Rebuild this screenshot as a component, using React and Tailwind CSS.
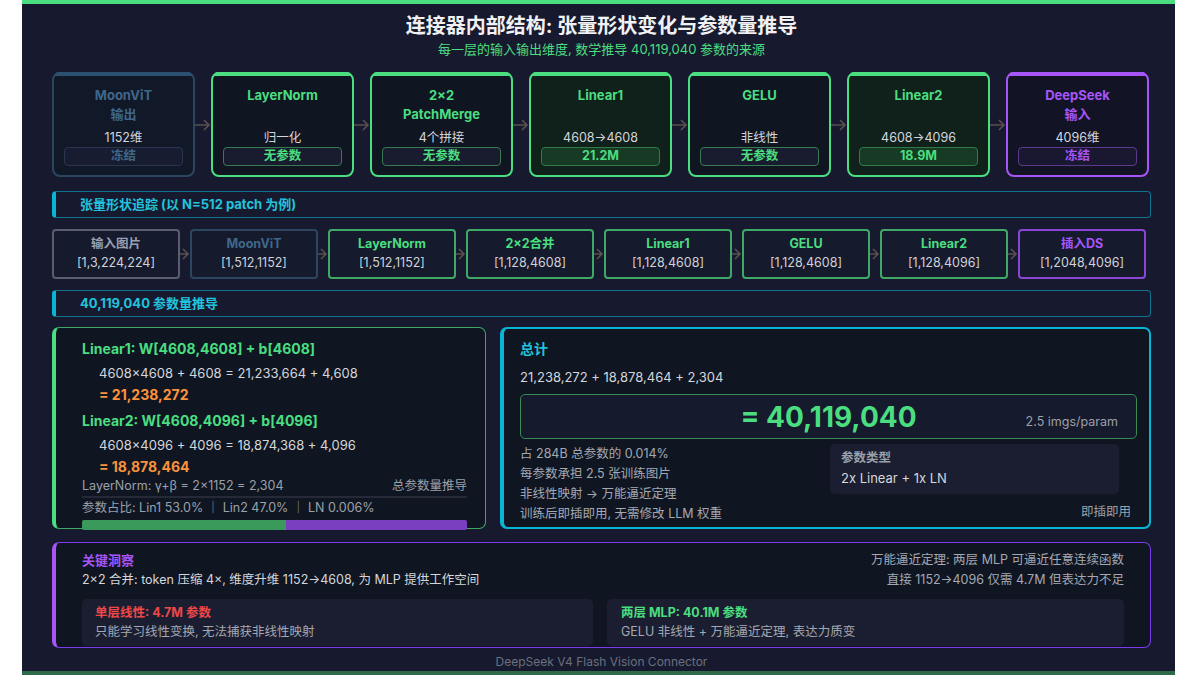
import React from "react";

const font = { fontFamily: '"Inter", "Noto Sans CJK SC", sans-serif' };

const topBoxes = [
  { t: ["MoonViT", "输出"], d: "1152维", p: "冻结", kind: "blue" },
  { t: ["LayerNorm"], d: "归一化", p: "无参数", kind: "green" },
  { t: ["2×2", "PatchMerge"], d: "4个拼接", p: "无参数", kind: "green" },
  { t: ["Linear1"], d: "4608→4608", p: "21.2M", kind: "lin" },
  { t: ["GELU"], d: "非线性", p: "无参数", kind: "green" },
  { t: ["Linear2"], d: "4608→4096", p: "18.9M", kind: "lin" },
  { t: ["DeepSeek", "输入"], d: "4096维", p: "冻结", kind: "purple" },
];

const boxStyle = {
  blue: { box: "border-[#2c4661] bg-[#111827]", top: "bg-[#2c5170]", title: "text-[#3f6789]", pill: "border-[#2a3650] bg-[#181c30] text-[#3f6789]" },
  green: { box: "border-[#4ade80] bg-[#101522]", top: "bg-[#4ade80]", title: "text-[#4ade80]", pill: "border-[#3a7a52] bg-[#181c2e] text-[#4ade80]" },
  lin: { box: "border-[#4ade80] bg-[#10201a]", top: "bg-[#4ade80]", title: "text-[#4ade80]", pill: "border-[#2f7a46] bg-[#173a24] text-[#4ade80]" },
  purple: { box: "border-[#a855f7] bg-[#121426]", top: "bg-[#a855f7]", title: "text-[#a855f7]", pill: "border-[#5b3a8c] bg-[#1a1730] text-[#a855f7]" },
};

const shapes = [
  { t: "输入图片", s: "[1,3,224,224]", b: "border-[#5a5e70]", c: "text-[#9aa0b0]" },
  { t: "MoonViT", s: "[1,512,1152]", b: "border-[#2c4661]", c: "text-[#3f6789]" },
  { t: "LayerNorm", s: "[1,512,1152]", b: "border-[#3fa866]", c: "text-[#4ade80]" },
  { t: "2×2合并", s: "[1,128,4608]", b: "border-[#3fa866]", c: "text-[#4ade80]" },
  { t: "Linear1", s: "[1,128,4608]", b: "border-[#3fa866]", c: "text-[#4ade80]" },
  { t: "GELU", s: "[1,128,4608]", b: "border-[#3fa866]", c: "text-[#4ade80]" },
  { t: "Linear2", s: "[1,128,4096]", b: "border-[#3fa866]", c: "text-[#4ade80]" },
  { t: "插入DS", s: "[1,2048,4096]", b: "border-[#8b45d6]", c: "text-[#a855f7]" },
];

const Arrow = ({ w = 16 }) => (
  <svg width={w} height="16" viewBox={`0 0 ${w} 16`} className="shrink-0">
    <path d={`M0 8h${w - 2}M${w - 7} 3l5 5-5 5`} stroke="#5a5050" strokeWidth="1.6" fill="none" />
  </svg>
);

const SectionBar = ({ children }) => (
  <div className="h-[27px] rounded-[4px] border border-[#0e7490] border-l-4 border-l-[#06b6d4] bg-[#171a2e] flex items-center pl-[24px] text-[13px] font-bold text-[#22c3dd]">
    {children}
  </div>
);

export default function App() {
  return (
    <div className="w-[1200px] h-[675px] bg-white flex" style={font}>
      <div className="ml-[22px] w-[1153px] h-[675px] bg-[#171a2e] border-t-4 border-[#4ade80] border-b-4 border-b-[#2d6a4a] flex flex-col pl-[30px] pr-[24px]">
        <div className="text-center pt-[8px]">
          <div className="text-[20px] font-bold text-[#f1f1f4] leading-[28px]">连接器内部结构: 张量形状变化与参数量推导</div>
          <div className="text-[13px] text-[#4ade80] leading-[18px]">每一层的输入输出维度, 数学推导 40,119,040 参数的来源</div>
        </div>

        <div className="flex items-center mt-[14px]">
          {topBoxes.map((b, i) => {
            const s = boxStyle[b.kind];
            return (
              <React.Fragment key={i}>
                {i > 0 && <Arrow />}
                <div className={`relative w-[143px] h-[105px] rounded-[8px] border-2 ${s.box} flex flex-col items-center pt-[12px] px-[10px]`}>
                  <div className={`absolute -top-[2px] left-[1px] right-[1px] h-[4px] rounded-t-[4px] ${s.top}`} />
                  <div className={`h-[38px] text-[13px] font-bold leading-[19px] text-center ${s.title}`}>
                    {b.t.map((l, j) => <div key={j}>{l}</div>)}
                  </div>
                  <div className="text-[12.5px] text-[#d4d6dc] mt-[5px] leading-[18px]">{b.d}</div>
                  <div className={`w-full h-[19px] rounded-[4px] border text-[12.5px] font-bold flex items-center justify-center ${s.pill}`}>{b.p}</div>
                </div>
              </React.Fragment>
            );
          })}
        </div>

        <div className="mt-[14px]"><SectionBar>张量形状追踪 (以 N=512 patch 为例)</SectionBar></div>

        <div className="flex items-center mt-[11px]">
          {shapes.map((b, i) => (
            <React.Fragment key={i}>
              {i > 0 && <Arrow w={10} />}
              <div className={`w-[128px] h-[50px] rounded-[4px] border-2 bg-[#161a2d] flex flex-col items-center justify-center ${b.b}`}>
                <div className={`text-[12.5px] font-bold leading-[18px] ${b.c}`}>{b.t}</div>
                <div className="text-[12.5px] text-[#cfd2d8] leading-[20px]">{b.s}</div>
              </div>
            </React.Fragment>
          ))}
        </div>

        <div className="mt-[11px]"><SectionBar>40,119,040 参数量推导</SectionBar></div>

        <div className="flex gap-[14px] mt-[10px]">
          <div className="w-[434px] h-[202px] rounded-[7px] border border-[#3fa866] border-l-4 border-l-[#4ade80] bg-[#0f1622] pl-[26px] pr-[18px] pt-[11px]">
            <div className="text-[14px] font-bold text-[#4ade80] leading-[20px]">Linear1: W[4608,4608] + b[4608]</div>
            <div className="pl-[17px] text-[13px] text-[#d4d6dc] leading-[24px] mt-[2px]">4608×4608 + 4608 = 21,233,664 + 4,608</div>
            <div className="pl-[17px] text-[14px] font-bold text-[#fb923c] leading-[20px]">= 21,238,272</div>
            <div className="text-[14px] font-bold text-[#4ade80] leading-[20px] mt-[6px]">Linear2: W[4608,4096] + b[4096]</div>
            <div className="pl-[17px] text-[13px] text-[#d4d6dc] leading-[24px] mt-[2px]">4608×4096 + 4096 = 18,874,368 + 4,096</div>
            <div className="pl-[17px] text-[14px] font-bold text-[#fb923c] leading-[20px]">= 18,878,464</div>
            <div className="flex justify-between text-[12.5px] text-[#9ca0aa] leading-[18px] border-b-2 border-[#262a38] pb-[1px]">
              <span>LayerNorm: γ+β = 2×1152 = 2,304</span><span>总参数量推导</span>
            </div>
            <div className="text-[12.5px] text-[#9ca0aa] leading-[20px]">参数占比: Lin1 53.0% │ Lin2 47.0% │ LN 0.006%</div>
            <div className="flex h-[10px] rounded-[2px] overflow-hidden mt-[2px]">
              <div className="w-[53%] bg-[#3a9a5c]" />
              <div className="flex-1 bg-[#7a3fc0]" />
            </div>
          </div>

          <div className="flex-1 h-[202px] rounded-[7px] border-2 border-[#06b6d4] border-l-4 bg-[#0f1622] pl-[16px] pr-[12px] pt-[10px]">
            <div className="text-[14px] font-bold text-[#22c3dd] leading-[20px]">总计</div>
            <div className="text-[13px] text-[#d4d6dc] leading-[20px] mt-[8px]">21,238,272 + 18,878,464 + 2,304</div>
            <div className="h-[45px] mt-[7px] rounded-[5px] border border-[#3a8a55] bg-[#161a2d] flex items-center relative">
              <div className="w-full text-center text-[28px] font-bold text-[#4ade80]">= 40,119,040</div>
              <div className="absolute right-[18px] bottom-[6px] text-[12.5px] text-[#9ca0aa]">2.5 imgs/param</div>
            </div>
            <div className="flex mt-[5px]">
              <div className="w-[310px] text-[12.5px] text-[#a4a8b2] leading-[20px]">
                <div>占 284B 总参数的 0.014%</div>
                <div>每参数承担 2.5 张训练图片</div>
                <div>非线性映射 → 万能逼近定理</div>
                <div>训练后即插即用, 无需修改 LLM 权重</div>
              </div>
              <div className="flex-1 flex flex-col items-end pr-[6px]">
                <div className="w-[289px] h-[50px] rounded-[5px] bg-[#1b1e30] pl-[11px] pt-[4px] self-start">
                  <div className="text-[12.5px] font-bold text-[#9ca0aa] leading-[20px]">参数类型</div>
                  <div className="text-[13px] text-[#d4d6dc] leading-[20px]">2x Linear + 1x LN</div>
                </div>
                <div className="text-[12.5px] text-[#9ca0aa] mt-[9px]">即插即用</div>
              </div>
            </div>
          </div>
        </div>

        <div className="mt-[13px] h-[106px] rounded-[7px] border border-[#7c3aed] border-l-4 border-l-[#a855f7] bg-[#0f1622] pl-[26px] pr-[26px] pt-[5px]">
          <div className="flex justify-between">
            <div>
              <div className="text-[13px] font-bold text-[#a855f7] leading-[20px] mt-[2px]">关键洞察</div>
              <div className="text-[12.5px] text-[#d4d6dc] leading-[20px]">2×2 合并: token 压缩 4×, 维度升维 1152→4608, 为 MLP 提供工作空间</div>
            </div>
            <div className="text-right text-[12.5px] text-[#a4a8b2] leading-[20px] mt-[2px]">
              <div>万能逼近定理: 两层 MLP 可逼近任意连续函数</div>
              <div>直接 1152→4096 仅需 4.7M 但表达力不足</div>
            </div>
          </div>
          <div className="flex gap-[14px] mt-[9px]">
            <div className="w-[511px] h-[47px] rounded-[5px] bg-[#1b1e30] pl-[13px] pt-[4px]">
              <div className="text-[12.5px] font-bold text-[#f04848] leading-[20px]">单层线性: 4.7M 参数</div>
              <div className="text-[12.5px] text-[#a4a8b2] leading-[18px]">只能学习线性变换, 无法捕获非线性映射</div>
            </div>
            <div className="flex-1 h-[47px] rounded-[5px] bg-[#1b1e30] pl-[14px] pt-[4px]">
              <div className="text-[12.5px] font-bold text-[#4ade80] leading-[20px]">两层 MLP: 40.1M 参数</div>
              <div className="text-[12.5px] text-[#a4a8b2] leading-[18px]">GELU 非线性 + 万能逼近定理, 表达力质变</div>
            </div>
          </div>
        </div>

        <div className="text-center text-[12px] text-[#6b6f7e] mt-[5px]">DeepSeek V4 Flash Vision Connector</div>
      </div>
    </div>
  );
}
